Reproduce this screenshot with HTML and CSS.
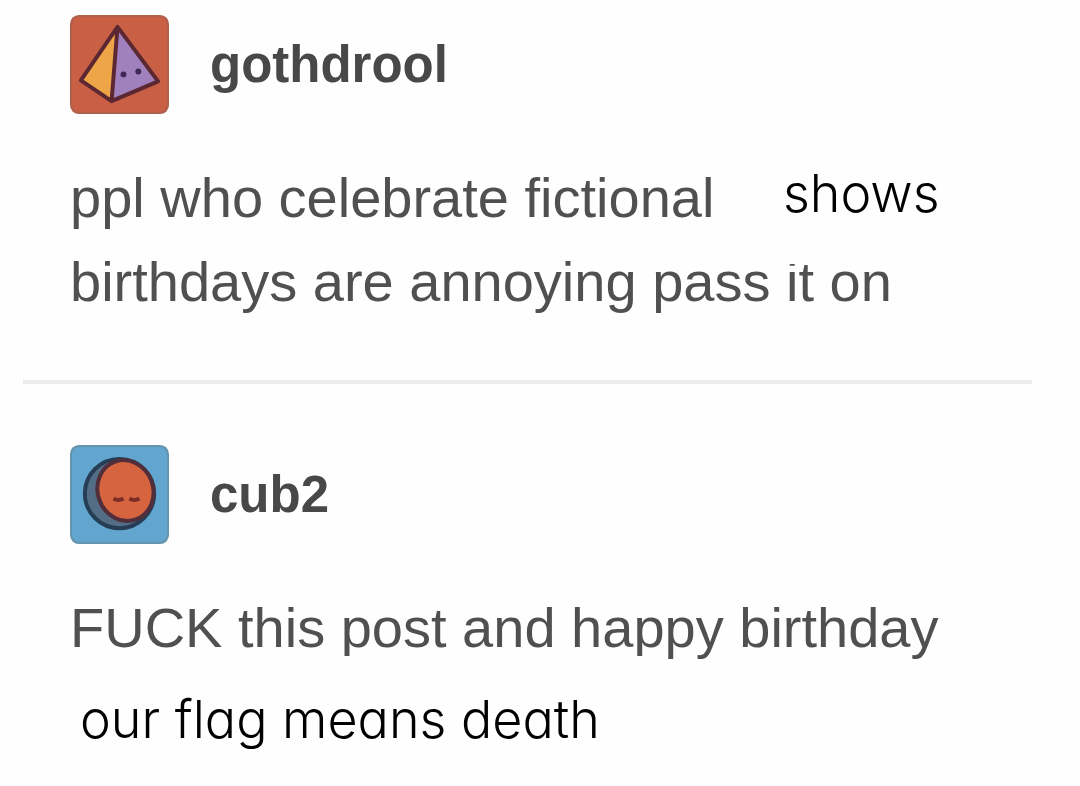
FILE: index.html
```
<!DOCTYPE html>
<html lang="en">
<head>
    <meta charset="UTF-8">
    <meta name="viewport" content="width=device-width, initial-scale=1.0">
    <title>gothdrool</title>
    <link rel="stylesheet" href="styles.css">
</head>
<body>
    <main class="thread">
        <article class="post">
            <header class="post-header">
                <svg class="avatar" viewBox="0 0 100 100" aria-hidden="true">
                    <rect width="100" height="100" rx="9" fill="#b1604c"/>
                    <rect x="2" y="2" width="96" height="96" rx="8" fill="#c95f45"/>
                    <path d="M48 12 L11 66 L42 87 Z" fill="#eda548"/>
                    <path d="M48 12 L42 87 L89 67 Z" fill="#a181bd"/>
                    <path d="M48 12 L11 66 L42 87 L89 67 Z M48 12 L42 87" fill="none" stroke="#5b2832" stroke-width="4" stroke-linejoin="round"/>
                    <circle cx="54" cy="60" r="3" fill="#3f2855"/>
                    <circle cx="69" cy="57" r="3" fill="#3f2855"/>
                </svg>
                <h2 class="username">gothdrool</h2>
            </header>
            <p class="post-text">
                ppl who celebrate fictional <span class="patch">shows</span><br>
                birthdays are annoying pass it on
            </p>
        </article>
        <hr class="divider">
        <article class="post">
            <header class="post-header">
                <svg class="avatar" viewBox="0 0 100 100" aria-hidden="true">
                    <rect width="100" height="100" rx="9" fill="#6595ac"/>
                    <rect x="2" y="2" width="96" height="96" rx="8" fill="#62a5ce"/>
                    <circle cx="50" cy="49" r="35" fill="#526d85" stroke="#263d56" stroke-width="4"/>
                    <ellipse cx="56" cy="46" rx="28" ry="31" fill="#d5643f" stroke="#512e39" stroke-width="4" transform="rotate(-20 56 46)"/>
                    <path d="M44 54 Q49 57 54 54 M60 54 Q65 57 70 54" fill="none" stroke="#7c2d28" stroke-width="4"/>
                </svg>
                <h2 class="username">cub2</h2>
            </header>
            <p class="post-text">FUCK this post and happy birthday</p>
            <p class="caption">our flag means death</p>
        </article>
    </main>
</body>
</html>
```
FILE: styles.css
```
body {
    margin: 0;
    background-color: #fefefe;
    color: #505050;
    font-family: "Liberation Sans", Arial, sans-serif;
}
.thread {
    padding: 15px 48px 0 23px;
}
.post {
    padding: 0 0 56px 47px;
}
.post:last-child {
    padding-bottom: 0;
}
.post-header {
    display: flex;
    align-items: center;
    gap: 41px;
    margin-bottom: 42px;
}
.avatar {
    width: 99px;
    height: 99px;
}
.username {
    margin: 0;
    color: #484848;
    font-size: 51px;
    line-height: 56px;
}
.post-text {
    margin: 0;
    font-size: 56px;
    line-height: 84px;
    white-space: nowrap;
}
/* pasted over the text, hides whatever is under it */
.patch {
    position: absolute;
    left: 734px;
    top: 144px;
    padding: 0 49px 20px;
    background-color: #fefefe;
}
.patch,
.caption {
    color: #000;
    font-family: Inter, "Liberation Sans", sans-serif;
    font-size: 52px;
    font-weight: 300;
    font-feature-settings: "cv11";
    line-height: 100px;
}
.divider {
    height: 4px;
    margin: 0 0 61px;
    border: none;
    background-color: #ececec;
}
.caption {
    position: relative;
    width: 564px;
    margin: -14px 0 0;
    padding: 14px 0 14px 10px;
    background-color: #fefefe;
}
```
